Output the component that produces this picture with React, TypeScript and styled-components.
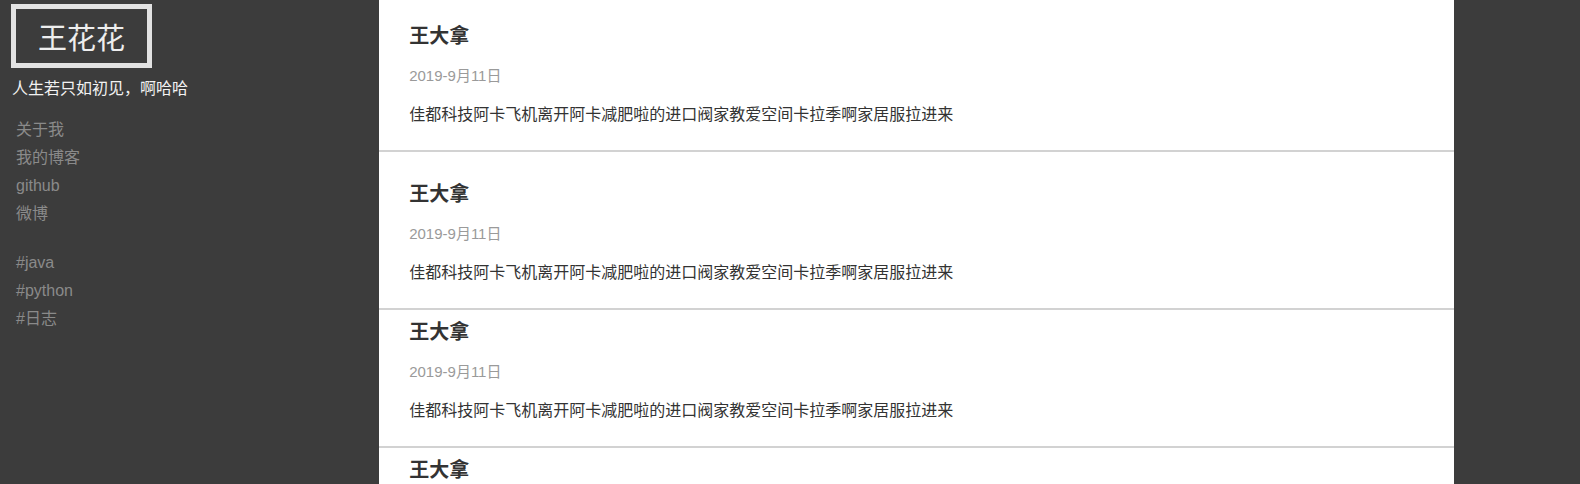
import React from "react";
import styled, { createGlobalStyle } from "styled-components";

const Global = createGlobalStyle`
  html, body {
    margin: 0;
    padding: 0;
    height: 100%;
    overflow: hidden;
    background: #3c3c3c;
  }
  body {
    font-family: "Liberation Sans", "Noto Sans CJK SC", sans-serif;
    -webkit-font-smoothing: antialiased;
  }
  * { box-sizing: border-box; }
`;

const Page = styled.div`
  display: flex;
  width: 100%;
  height: 100vh;
  overflow: hidden;
  background: #3c3c3c;
`;

const Sidebar = styled.aside`
  width: 24%;
  flex: none;
  padding: 4px 0 0 11px;
  display: flex;
  flex-direction: column;
  align-items: flex-start;
`;

const Logo = styled.div`
  width: 141px;
  height: 64px;
  border: 5px solid #e2e2e2;
  display: flex;
  align-items: center;
  justify-content: center;
  color: #eeeeee;
  font-size: 29px;
  line-height: 1;
  font-family: "Noto Sans CJK SC", sans-serif;
`;

const Motto = styled.p`
  margin: 7px 0 0 1px;
  color: #f2f2f2;
  font-size: 16px;
  line-height: 24px;
  font-family: "Noto Sans CJK SC", sans-serif;
`;

const NavList = styled.ul<{ $gap: number }>`
  list-style: none;
  margin: ${(p) => p.$gap}px 0 0 5px;
  padding: 0;
`;

const NavItem = styled.li`
  color: #8a8a8a;
  font-size: 16px;
  line-height: 28px;
  height: 28px;
`;

const Main = styled.main`
  width: 68%;
  flex: none;
  background: #ffffff;
  height: 100%;
  overflow: hidden;
`;

const Card = styled.article<{ $top: number }>`
  padding: ${(p) => p.$top}px 30px 25px;
  border-bottom: 2px solid #d2d2d2;
`;

const Title = styled.h3`
  margin: 0;
  font-size: 20px;
  line-height: 24px;
  font-weight: bold;
  color: #333333;
  font-family: "Noto Sans CJK SC", sans-serif;
`;

const DateLine = styled.div`
  margin-top: 19px;
  font-size: 15px;
  line-height: 20px;
  color: #9a9a9a;
`;

const Body = styled.p`
  margin: 15px 0 0;
  font-size: 16px;
  line-height: 24px;
  color: #333333;
  font-family: "Noto Sans CJK SC", sans-serif;
`;

const posts = [23, 29, 9, 9];

export default function App() {
  return (
    <>
      <Global />
      <Page>
        <Sidebar>
          <Logo>王花花</Logo>
          <Motto>人生若只如初见，啊哈哈</Motto>
          <NavList $gap={17}>
            <NavItem>关于我</NavItem>
            <NavItem>我的博客</NavItem>
            <NavItem>github</NavItem>
            <NavItem>微博</NavItem>
          </NavList>
          <NavList $gap={21}>
            <NavItem>#java</NavItem>
            <NavItem>#python</NavItem>
            <NavItem>#日志</NavItem>
          </NavList>
        </Sidebar>
        <Main>
          {posts.map((top, i) => (
            <Card key={i} $top={top}>
              <Title>王大拿</Title>
              <DateLine>2019-9月11日</DateLine>
              <Body>佳都科技阿卡飞机离开阿卡减肥啦的进口阀家教爱空间卡拉季啊家居服拉进来</Body>
            </Card>
          ))}
        </Main>
      </Page>
    </>
  );
}
